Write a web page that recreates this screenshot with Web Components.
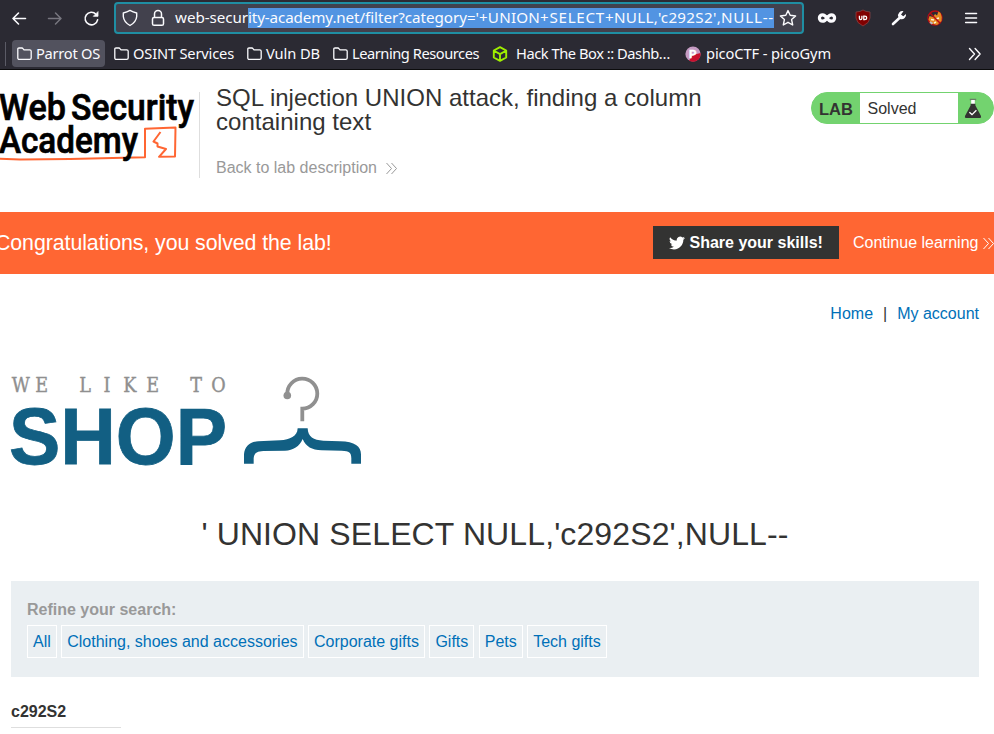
<!DOCTYPE html>
<html lang="en">
<head>
<meta charset="utf-8">
<title>SQL injection UNION attack, finding a column containing text</title>
<style>
html,body{margin:0;padding:0}
body{width:994px;height:734px;overflow:hidden;background:#fff;color:#333332;font:16px/20px "Liberation Sans",Arial,sans-serif}
</style>
</head>
<body>
<browser-chrome></browser-chrome>
<lab-header></lab-header>
<solved-banner></solved-banner>
<shop-page>
  <search-filter slot="filter">
    <filter-link>All</filter-link><filter-link>Clothing, shoes and accessories</filter-link><filter-link>Corporate gifts</filter-link><filter-link>Gifts</filter-link><filter-link>Pets</filter-link><filter-link>Tech gifts</filter-link>
  </search-filter>
</shop-page>
<script>
const define = (name, html) => {
  const t = document.createElement('template');
  t.innerHTML = html;
  customElements.define(name, class extends HTMLElement {
    constructor() {
      super();
      this.attachShadow({mode: 'open'}).append(t.content.cloneNode(true));
    }
  });
};

// Tracks its text so that it fills the width given in the "w" attribute.
class FitText extends HTMLElement {
  constructor() {
    super();
    this.attachShadow({mode: 'open'}).innerHTML = '<style>:host{display:inline-block;white-space:nowrap;flex:none}</style><span><slot></slot></span>';
  }
  fit() {
    const w = +this.getAttribute('w');
    const span = this.shadowRoot.querySelector('span');
    const natural = span.getBoundingClientRect().width;
    if (natural) span.style.letterSpacing = (w - natural) / this.textContent.length + 'px';
    this.style.width = w + 'px';
  }
}
customElements.define('fit-text', FitText);

define('folder-icon', `
<style>:host{display:block;flex:none;width:15px;height:14px}svg{display:block}</style>
<svg width="15" height="14" fill="none" stroke="#fbfbfe" stroke-width="1.3" stroke-linejoin="round"><path d="M.8 2.2Q.8 1 2 1H4.8Q5.6 1 6.2 1.8L7 2.8H12.7Q14.2 2.8 14.2 4.3V11Q14.2 12.4 12.7 12.4H2.3Q.8 12.4.8 11Z"/></svg>`);

define('bookmark-item', `
<style>
:host{display:flex;box-sizing:border-box;flex:none;align-items:center;gap:4px;height:27px;padding:0 5px;border-radius:4px;white-space:nowrap}
:host([active]){background:#52525e}
:host([site]){gap:8px}
:host([tight]){gap:5px}
span{margin-top:-2px}
</style>
<slot name="icon"></slot><span><slot></slot></span>`);

define('address-bar', `
<style>
:host{display:flex;box-sizing:border-box;width:690px;height:32px;border:2px solid #1f8ea3;border-radius:4px;background:#42414d;align-items:center;padding-left:6px}
svg{display:block;flex:none}
.url{display:flex;margin-left:9px;width:599px;white-space:nowrap;line-height:19px;font-size:15.2px}
mark{display:flex;background:#5294e2;color:#fbfbfe;height:20px}
</style>
<svg width="16" height="18" fill="none" stroke="#fbfbfe" stroke-width="1.4" stroke-linejoin="round"><path d="M8 1.4Q11 3.2 14.7 4V7.5Q14.2 13 8 16.5Q1.8 13 1.3 7.5V4Q5 3.2 8 1.4Z"/></svg>
<svg style="margin-left:12px" width="16" height="18" fill="none" stroke="#fbfbfe" stroke-width="1.5"><rect x="2.5" y="8.5" width="11" height="7.8" rx="1.6"/><path d="M4.5 8.4V4.9A3.5 3.5 0 0 1 11.5 4.9V8.4"/></svg>
<div class="url"><fit-text w="73">web-secur</fit-text><mark><fit-text w="117">ity-academy.net/</fit-text><fit-text w="114">filter?category='</fit-text><fit-text w="61">+UNION</fit-text><fit-text w="65">+SELECT</fit-text><fit-text w="53">+NULL,</fit-text><fit-text w="63">'c292S2',</fit-text><fit-text w="53">NULL--</fit-text></mark></div>
<svg style="margin-left:5px" width="18" height="18" fill="none" stroke="#fbfbfe" stroke-width="1.4" stroke-linejoin="round"><path d="M9 1.6 11.2 6.3 16.6 7 12.6 10.6 13.7 16 9 13.3 4.3 16 5.4 10.6 1.4 7 6.8 6.3Z"/></svg>`);

define('browser-chrome', `
<style>
:host{display:block;box-sizing:border-box;height:70px;background:#2b2a33;border-bottom:1px solid #0c0c0d;color:#fbfbfe;font:14.67px/20px "Noto Sans",sans-serif}
svg{display:block;flex:none}
.nav{display:flex;align-items:center;height:36px;box-sizing:border-box;padding-left:11px}
.marks{display:flex;align-items:center;height:35px}
.sep{width:1px;height:24px;margin:0 6px 0 5px;background:#5b5b66}
.tools{display:flex;align-items:center;gap:16px;margin-left:13px}
</style>
<div class="nav">
  <svg width="16" height="16" fill="none" stroke="#fbfbfe" stroke-width="1.6" stroke-linecap="round" stroke-linejoin="round"><path d="M14.5 8.5H2M7.5 3 2 8.5 7.5 14"/></svg>
  <svg style="margin-left:20px" width="16" height="16" fill="none" stroke="#77767f" stroke-width="1.5" stroke-linecap="round" stroke-linejoin="round"><path d="M1.5 8.5H14M8.5 3 14 8.5 8.5 14"/></svg>
  <svg style="margin-left:20px" width="18" height="18" fill="none" stroke="#fbfbfe" stroke-width="1.6" stroke-linecap="round"><path d="M13 5.2A6.3 6.3 0 1 0 14.6 10.8"/><path d="M15 3V7.3H10.7Z" fill="#fbfbfe" stroke-width=".8"/></svg>
  <address-bar style="margin-left:13px"></address-bar>
  <div class="tools">
    <svg width="20" height="20" fill="none" stroke="#fbfbfe" stroke-width="3.2"><path d="M10 10C8.3 7.5 7 6.8 5.6 6.8A3.2 3.2 0 0 0 5.6 13.2C7 13.2 8.3 12.5 10 10 11.7 7.5 13 6.8 14.4 6.8A3.2 3.2 0 0 1 14.4 13.2C13 13.2 11.7 12.5 10 10Z"/></svg>
    <svg width="20" height="20"><path d="M10 2Q12.5 3.8 17 4V10Q16.5 15 10 18Q3.5 15 3 10V4Q7.5 3.8 10 2Z" fill="#800000" stroke="#8d4648" stroke-width=".7"/><path d="M6.4 7.7V10.3Q6.4 11.6 7.6 11.6T8.9 10.3V7.7M10.8 8.2H11.8Q13.7 8.2 13.7 9.9T11.8 11.6H10.8Z" fill="none" stroke="#fff" stroke-width="1.3"/></svg>
    <svg width="20" height="20"><path d="M4 16 11.5 9" stroke="#fbfbfe" stroke-width="2.6" stroke-linecap="round"/><path d="M14.5 3.2A4.4 4.4 0 0 0 9.3 8.8L11.5 11.2A4.5 4.5 0 0 0 17 6L14.3 8.2 12 6.4Z" fill="#fbfbfe"/></svg>
    <svg width="20" height="20"><circle cx="10" cy="10" r="7" fill="none" stroke="#b70c14" stroke-width="1.4"/><path d="M3.5 11.5 4.5 8 8 9 10 6 12 7.5 13.5 3.5 15.5 5 16.8 9 16.5 13 12 17 6 15.5Z" fill="#e68a22"/><path d="M6 11.5 9 12M11 11 14 10M9 15 11 14" stroke="#fff3d4" stroke-width="1.6"/><path d="M5 14 7.5 15.8" stroke="#b8bdca" stroke-width="2"/><path d="M5 5 15 15" stroke="#b70c14" stroke-width="1.5"/></svg>
    <svg width="20" height="20" stroke="#fbfbfe" stroke-width="1.4" stroke-linecap="round"><path d="M4.6 5.5H15.6M4.6 10H15.6M4.6 14.5H15.6"/></svg>
  </div>
</div>
<div class="marks">
  <div class="sep"></div>
  <bookmark-item active><folder-icon slot="icon"></folder-icon><fit-text w="64">Parrot OS</fit-text></bookmark-item>
  <bookmark-item style="margin-left:4px"><folder-icon slot="icon"></folder-icon><fit-text w="101">OSINT Services</fit-text></bookmark-item>
  <bookmark-item style="margin-left:3px"><folder-icon slot="icon"></folder-icon><fit-text w="54">Vuln DB</fit-text></bookmark-item>
  <bookmark-item style="margin-left:3px"><folder-icon slot="icon"></folder-icon><fit-text w="127">Learning Resources</fit-text></bookmark-item>
  <bookmark-item site style="margin-left:3px"><svg slot="icon" width="16" height="16" fill="none" stroke="#9fef00" stroke-width="1.9" stroke-linejoin="round"><path d="M8 1.1 14.2 4.5V11.5L8 14.9 1.8 11.5V4.5ZM2.5 5 8 8.1 13.5 5M8 8.1V14"/></svg><fit-text w="154">Hack The Box :: Dashb…</fit-text></bookmark-item>
  <bookmark-item tight style="margin-left:5px"><svg slot="icon" width="16" height="16"><circle cx="8" cy="8" r="7.6" fill="#c59bc3"/><path d="M15.5 7A7.6 7.6 0 0 1 4 14.5L8 9Z" fill="#c8102e"/><text x="4.1" y="11.8" font-family="Liberation Sans" font-weight="700" font-size="11" fill="#fff" stroke="#fff" stroke-width=".5">P</text></svg><fit-text w="125">picoCTF - picoGym</fit-text></bookmark-item>
  <svg style="margin-left:auto;margin-right:12px" width="14" height="14" fill="none" stroke="#fbfbfe" stroke-width="1.4" stroke-linecap="round" stroke-linejoin="round"><path d="M1.5 1.5 6.5 7 1.5 12.5M7.1 1.5 12.1 7 7.1 12.5"/></svg>
</div>`);

define('academy-logo', `
<style>:host{display:block;width:199px;height:86px}svg{display:block;overflow:visible}</style>
<svg width="199" height="86" viewBox="0 92 199 86">
<g font-family="Roboto,Inter,sans-serif" font-weight="500" font-size="36.5" fill="#000" stroke="#000" stroke-width=".7">
<text x="-1" y="120.2" textLength="67" lengthAdjust="spacingAndGlyphs">Web</text>
<text x="71" y="120.2" textLength="123" lengthAdjust="spacingAndGlyphs">Security</text>
</g>
<path d="M-1 158.7 20 159.5 70 159 145 157.2V128.7L175.5 127.5 175 156.5 159 156.8 166 149 157.5 146.5 157.5 143.5 153.5 141.5 160.5 132" fill="none" stroke="#ff6633" stroke-width="2" stroke-linejoin="round"/>
<text x="-1" y="152.8" textLength="139" lengthAdjust="spacingAndGlyphs" font-family="Roboto,Inter,sans-serif" font-weight="500" font-size="36.5" stroke="#000" stroke-width=".7">Academy</text>
</svg>`);

define('lab-status', `
<style>
:host{display:flex;box-sizing:border-box;width:183px;height:32px;border:1px solid #73d36f;border-radius:16px;background:#73d36f;overflow:hidden;line-height:31px}
b{width:48px;box-sizing:border-box;padding:1px 0 0 7px;font-size:16.5px}
span{width:98px;box-sizing:border-box;padding-left:7.5px;background:#fff}
svg{display:block;margin:5px 0 0 6px}
</style>
<b>LAB</b><span>Solved</span>
<svg width="18" height="22"><path d="M5.8.7H12.2V2.2H5.8Z" fill="#6a7d67"/><path d="M7.2 2H10.8V7H7.2Z" fill="#fff"/><path d="M6.6 5.8H11.4V7.5L17 18Q17.7 20 16 20H2Q.3 20 1 18L6.6 7.5Z" fill="#333332"/><path d="M5.4 14.2 8 16.6 12.4 12.3" fill="none" stroke="#fff" stroke-width="1.3"/></svg>`);

define('double-chevron', `
<style>:host{display:block;flex:none;width:14px;height:13px}svg{display:block}</style>
<svg width="14" height="13" fill="none" stroke="currentColor" stroke-width="1"><path d="M1.5 1 6.5 6.5 1.5 12M6.5 1 11.5 6.5 6.5 12"/></svg>`);

define('lab-header', `
<style>
:host{display:flex;box-sizing:border-box;height:142px;padding-top:22px}
.title{box-sizing:border-box;height:86px;border-left:1px solid #dedede;padding:0 0 0 16px;width:611px}
h2{margin:-6px 0 0;font-size:24px;line-height:24px;font-weight:400;width:520px;letter-spacing:.02px}
a{display:flex;align-items:center;gap:8px;margin-top:24px;color:#999}
</style>
<academy-logo></academy-logo>
<div class="title"><h2>SQL injection UNION attack, finding a column containing text</h2><a>Back to lab description<double-chevron></double-chevron></a></div>
<lab-status style="margin-left:1px"></lab-status>`);

define('solved-banner', `
<style>
:host{display:flex;align-items:center;height:62px;background:#ff6633;color:#fff;overflow:hidden}
h3{flex:none;margin:0 0 0 -5px;font-size:21.33px;letter-spacing:-.07px;font-weight:400;width:658px;white-space:nowrap}
button{all:unset;flex:none;box-sizing:border-box;display:flex;align-items:center;gap:4.5px;width:186px;height:33px;padding:1px 0 0 16px;background:#333332;font-weight:700;white-space:nowrap;margin-top:-1px}
a{flex:none;display:flex;align-items:center;gap:4px;margin-left:14px;white-space:nowrap}
svg{display:block}
</style>
<h3>Congratulations, you solved the lab!</h3>
<button><svg width="16" height="16" viewBox="0 0 24 24" fill="#fff"><path d="M24 4.6a10 10 0 0 1-2.8.8 5 5 0 0 0 2.1-2.7c-1 .6-2 1-3.1 1.2a4.9 4.9 0 0 0-8.4 4.5A14 14 0 0 1 1.7 3.2 4.9 4.9 0 0 0 3.2 9.7a4.9 4.9 0 0 1-2.2-.6 4.9 4.9 0 0 0 3.9 4.9 5 5 0 0 1-2.2.1 4.9 4.9 0 0 0 4.6 3.4A9.9 9.9 0 0 1 0 19.5a14 14 0 0 0 7.5 2.2c9.1 0 14.3-7.7 14-14.6A10 10 0 0 0 24 4.6Z"/></svg>Share your skills!</button>
<a>Continue learning<double-chevron></double-chevron></a>`);

define('shop-logo', `
<style>:host{display:block;width:380px;height:110px}svg{display:block}</style>
<svg width="380" height="110" viewBox="0 365 380 110">
<text transform="translate(1 0) scale(.88 1)" y="392.5" x="12.2 39 60 89 116.5 139 165 190 215 239" font-family="DejaVu Serif,serif" font-size="20" fill="#8f8f8f" stroke="#8f8f8f" stroke-width=".4">WE LIKE TO</text>
<text x="9" y="463.5" font-family="Liberation Sans,sans-serif" font-weight="700" font-size="80" fill="#125f83" stroke="#125f83" stroke-width=".8" textLength="218" lengthAdjust="spacingAndGlyphs">SHOP</text>
<path d="M287.3 394A15 15 0 1 1 302.3 408.6V421.3" fill="none" stroke="#909090" stroke-width="3.8"/>
<circle cx="287.3" cy="395.5" r="3.8" fill="#909090"/>
<path transform="translate(230 365) scale(.3333)" fill="#125f83" d="M42 296V268C44 245 58 231 85 229L150 226C180 224 202 215 203 190H233C234 215 250 226 280 227L330 229C375 230 393 245 393 268V296H364V280C364 262 358 258 335 257L275 256C245 255 228 245 218 222C208 245 190 256 165 257L100 258C80 259 72 265 71 280V296Z"/>
</svg>`);

define('filter-link', `
<style>:host{display:block;box-sizing:border-box;height:33px;border:1px solid #fff;padding:0 5px;line-height:31px;color:#0070b8;white-space:nowrap}</style>
<slot></slot>`);

define('search-filter', `
<style>
:host{display:block;box-sizing:border-box;height:96px;background:#eaeff2;padding:19px 16px}
label{display:block;color:#999;font-weight:700;line-height:20px;margin-bottom:5px}
.list{display:flex;gap:4.45px}
</style>
<label>Refine your search:</label><div class="list"><slot></slot></div>`);

define('shop-page', `
<style>
:host{display:block;padding:0 15px 0 11px}
nav{display:flex;justify-content:flex-end;padding-top:30px;height:61px;box-sizing:content-box}
nav a{color:#0070b8}
nav span{margin:0 10px}
shop-logo{margin-left:-11px}
h1{margin:40px 0 28px;font-size:32px;line-height:38px;font-weight:400;text-align:center;letter-spacing:.11px}
h4{margin:25px 0 0;font-size:16px;line-height:20px;width:110px;padding-bottom:5px;border-bottom:1px solid #dedede}
</style>
<nav><a>Home</a><span>|</span><a>My account</a></nav>
<shop-logo></shop-logo>
<h1>' UNION SELECT NULL,'c292S2',NULL--</h1>
<slot name="filter"></slot>
<h4>c292S2</h4>`);

// Measure only once every element and its styles are in place.
const fitAll = root => root.querySelectorAll('*').forEach(el => {
  if (el instanceof FitText) el.fit();
  else if (el.shadowRoot) fitAll(el.shadowRoot);
});
fitAll(document);
</script>
</body>
</html>
